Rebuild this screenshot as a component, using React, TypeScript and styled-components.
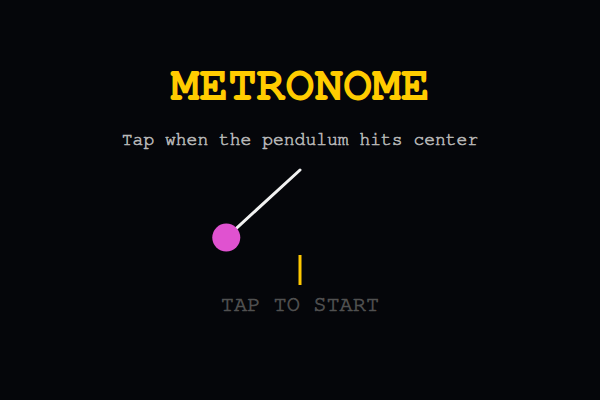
import React from "react";
import styled, { createGlobalStyle } from "styled-components";

const GlobalStyle = createGlobalStyle`
  html, body {
    margin: 0;
    padding: 0;
    background: #05060a;
  }
  body {
    font-family: "FreeMono", "Liberation Mono", "Courier New", monospace;
  }
`;

const Screen = styled.div`
  width: 600px;
  height: 400px;
  background: #05060a;
  display: flex;
  flex-direction: column;
  align-items: center;
  overflow: hidden;
`;

const Title = styled.h1`
  margin: 64px 0 0;
  font-family: "FreeMono", "Liberation Mono", "Courier New", monospace;
  font-weight: 700;
  font-size: 48px;
  line-height: 44px;
  color: #ffcc00;
`;

const Hint = styled.p`
  margin: 21px 0 0;
  font-size: 18px;
  line-height: 22px;
  color: #b8b8b8;
  -webkit-text-stroke: 0.6px #b8b8b8;
`;

const Stage = styled.svg`
  display: block;
  margin-top: 15px;
`;

const StartLabel = styled.div`
  margin-top: 1px;
  font-size: 22px;
  line-height: 26px;
  color: #505050;
  -webkit-text-stroke: 0.7px #505050;
`;

const angle = 47.5;
const armLength = 100;

export default function App() {
  const rad = (angle * Math.PI) / 180;
  const px = 100;
  const py = 4;
  const bx = px - Math.sin(rad) * armLength;
  const by = py + Math.cos(rad) * armLength;

  return (
    <>
      <GlobalStyle />
      <Screen>
        <Title>METRONOME</Title>
        <Hint>Tap when the pendulum hits center</Hint>
        <Stage width="200" height="124" viewBox="0 0 200 124">
          <line x1={px} y1={py} x2={bx} y2={by} stroke="#f2f2f2" strokeWidth="3" strokeLinecap="round" />
          <circle cx={bx} cy={by} r="14" fill="#e052d0" />
          <rect x="98.5" y="89" width="3" height="30" fill="#ffc800" />
        </Stage>
        <StartLabel>TAP TO START</StartLabel>
      </Screen>
    </>
  );
}
